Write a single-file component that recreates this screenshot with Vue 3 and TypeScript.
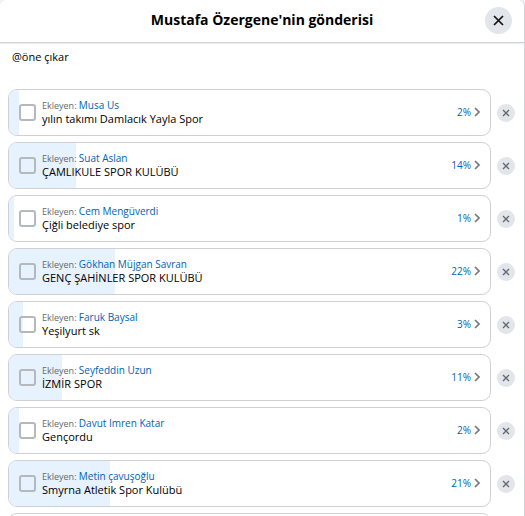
<script setup lang="ts">
import { ref } from 'vue'

interface PollOption {
  id: number
  addedBy: string
  label: string
  percent: number
}

const options: PollOption[] = [
  { id: 1, addedBy: 'Musa Us', label: 'yılın takımı Damlacık Yayla Spor', percent: 2 },
  { id: 2, addedBy: 'Suat Aslan', label: 'ÇAMLIKULE SPOR KULÜBÜ', percent: 14 },
  { id: 3, addedBy: 'Cem Mengüverdi', label: 'Çiğli belediye spor', percent: 1 },
  { id: 4, addedBy: 'Gökhan Müjgan Savran', label: 'GENÇ ŞAHİNLER SPOR KULÜBÜ', percent: 22 },
  { id: 5, addedBy: 'Faruk Baysal', label: 'Yeşilyurt sk', percent: 3 },
  { id: 6, addedBy: 'Seyfeddin Uzun', label: 'İZMİR SPOR', percent: 11 },
  { id: 7, addedBy: 'Davut Imren Katar', label: 'Gençordu', percent: 2 },
  { id: 8, addedBy: 'Metin çavuşoğlu', label: 'Smyrna Atletik Spor Kulübü', percent: 21 },
]

const selected = ref<number[]>([])
</script>

<template>
  <main class="dialog">
    <header class="header">
      <h1 class="title">Mustafa Özergene'nin gönderisi</h1>
      <button class="close" type="button">
        <svg viewBox="0 0 11 11" width="11" height="11" aria-hidden="true">
          <path d="M1 1l9 9M10 1L1 10" fill="none" stroke="currentColor" stroke-width="1.7" />
        </svg>
      </button>
    </header>

    <p class="message">@öne çıkar</p>

    <ul class="options">
      <li v-for="option in options" :key="option.id" class="row">
        <div class="card">
          <div class="fill" :style="{ width: option.percent + '%' }"></div>
          <input :id="'option-' + option.id" v-model="selected" class="check" type="checkbox" :value="option.id" />
          <div class="text">
            <span class="author">Ekleyen: <a href="#">{{ option.addedBy }}</a></span>
            <label class="label" :for="'option-' + option.id">{{ option.label }}</label>
          </div>
          <button class="votes" type="button">
            {{ option.percent }}%
            <svg viewBox="0 0 6 10" width="6" height="10" aria-hidden="true">
              <path d="M1 1l4 4-4 4" fill="none" stroke="#75797f" stroke-width="1.7" />
            </svg>
          </button>
        </div>
        <button class="remove" type="button">
          <svg viewBox="0 0 8 8" width="8" height="8" aria-hidden="true">
            <path d="M1 1l6 6M7 1L1 7" fill="none" stroke="currentColor" stroke-width="1.4" />
          </svg>
        </button>
      </li>
      <li class="row"><div class="card"></div></li>
    </ul>
  </main>
</template>

<style>
body {
  background: #f0f1f3;
}
</style>

<style scoped>
.dialog {
  box-sizing: border-box;
  height: 100vh;
  overflow: hidden;
  background: #fff;
  border-right: 1px solid #d3d5d8;
  border-radius: 6px 6px 0 0;
  color: #000;
  font-family: "Open Sans", "Noto Sans", sans-serif;
}

button {
  padding: 0;
  border: 0;
  font-family: inherit;
  cursor: pointer;
}

.header {
  display: grid;
  grid-template-columns: 27px 1fr 27px;
  align-items: center;
  height: 40px;
  padding: 0 12px 2px;
  border-bottom: 1px solid #d0d2d5;
  box-shadow: 0 1px 1px #eceef0;
}

.title {
  grid-column: 2;
  margin: 0;
  font-size: 14px;
  line-height: 20px;
  font-weight: 700;
  text-align: center;
}

.close,
.remove {
  display: flex;
  align-items: center;
  justify-content: center;
  border-radius: 50%;
  background: #e2e5e9;
}

.close {
  width: 27px;
  height: 27px;
  color: #111;
}

.message {
  margin: 0;
  padding: 6px 12px 24px;
  font-size: 11px;
  line-height: 16px;
}

.options {
  display: flex;
  flex-direction: column;
  gap: 6px;
  margin: 0;
  padding: 0 9px 0 8px;
  list-style: none;
}

.row {
  display: grid;
  grid-template-columns: 1fr 18px;
  align-items: center;
  gap: 6px;
}

.card {
  position: relative;
  display: flex;
  align-items: center;
  gap: 6px;
  box-sizing: border-box;
  height: 47px;
  padding: 0 10px;
  border: 1px solid #ced0d4;
  border-radius: 9px;
  overflow: hidden;
}

.fill {
  position: absolute;
  inset: 0 auto 0 0;
  background: #e7f2ff;
}

.check {
  position: relative;
  flex: none;
  appearance: none;
  box-sizing: border-box;
  width: 17px;
  height: 17px;
  margin: 0;
  border: 2px solid #b5b8bd;
  border-radius: 3px;
}

.check:checked {
  background: #0064d1;
}

.text {
  position: relative;
  display: flex;
  flex: 1;
  flex-direction: column;
  padding-bottom: 2px;
}

.author {
  color: #65686c;
  font-size: 9px;
  line-height: 13px;
}

.author a {
  color: #0062b5;
  font-size: 10px;
  text-decoration: none;
}

.label {
  font-size: 11px;
  line-height: 13px;
}

.votes {
  position: relative;
  display: flex;
  align-items: center;
  gap: 3px;
  padding-bottom: 2px;
  background: none;
  color: #0062b5;
  font-size: 10px;
  line-height: 14px;
}

.remove {
  width: 18px;
  height: 18px;
  color: #65686c;
}
</style>
